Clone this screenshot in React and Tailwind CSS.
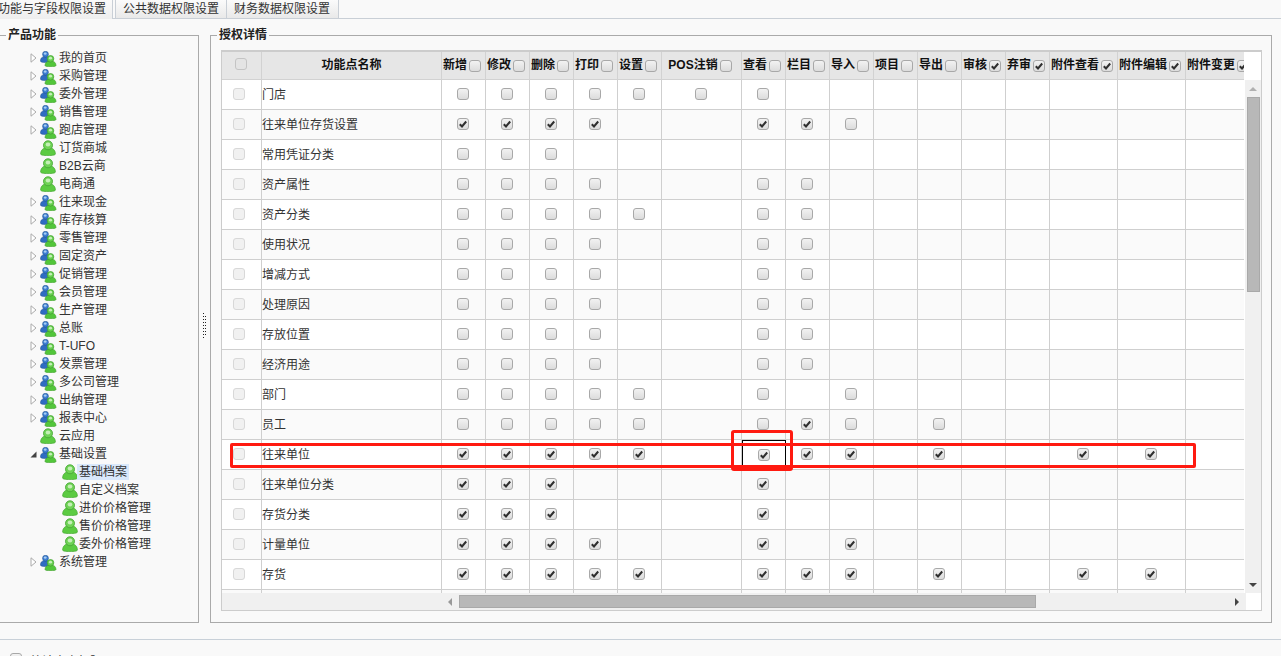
const treeItems = [
  { name: '我的首页', type: 'group' },
  { name: '采购管理', type: 'group' },
  { name: '委外管理', type: 'group' },
  { name: '销售管理', type: 'group' },
  { name: '跑店管理', type: 'group' },
  { name: '订货商城', type: 'leaf' },
  { name: 'B2B云商', type: 'leaf' },
  { name: '电商通', type: 'leaf' },
  { name: '往来现金', type: 'group' },
  { name: '库存核算', type: 'group' },
  { name: '零售管理', type: 'group' },
  { name: '固定资产', type: 'group' },
  { name: '促销管理', type: 'group' },
  { name: '会员管理', type: 'group' },
  { name: '生产管理', type: 'group' },
  { name: '总账', type: 'group' },
  { name: 'T-UFO', type: 'group' },
  { name: '发票管理', type: 'group' },
  { name: '多公司管理', type: 'group' },
  { name: '出纳管理', type: 'group' },
  { name: '报表中心', type: 'group' },
  { name: '云应用', type: 'leaf' },
  { name: '基础设置', type: 'open' },
  { name: '基础档案', type: 'child', selected: true },
  { name: '自定义档案', type: 'child' },
  { name: '进价价格管理', type: 'child' },
  { name: '售价价格管理', type: 'child' },
  { name: '委外价格管理', type: 'child' },
  { name: '系统管理', type: 'group' },
];

const columns = [
  { name: '新增', width: 'w-[44px]', checked: false },
  { name: '修改', width: 'w-[44px]', checked: false },
  { name: '删除', width: 'w-[44px]', checked: false },
  { name: '打印', width: 'w-[44px]', checked: false },
  { name: '设置', width: 'w-[44px]', checked: false },
  { name: 'POS注销', width: 'w-[80px]', checked: false },
  { name: '查看', width: 'w-[44px]', checked: false },
  { name: '栏目', width: 'w-[44px]', checked: false },
  { name: '导入', width: 'w-[44px]', checked: false },
  { name: '项目', width: 'w-[44px]', checked: false },
  { name: '导出', width: 'w-[44px]', checked: false },
  { name: '审核', width: 'w-[44px]', checked: true },
  { name: '弃审', width: 'w-[44px]', checked: true },
  { name: '附件查看', width: 'w-[68px]', checked: true },
  { name: '附件编辑', width: 'w-[68px]', checked: true },
  { name: '附件变更', width: 'w-[68px]', checked: true },
];

// 0 = no box, 1 = empty box, 2 = ticked box, one digit per column
const rows = [
  ['门店', '1111111000000000'],
  ['往来单位存货设置', '2222002210000000'],
  ['常用凭证分类', '1110000000000000'],
  ['资产属性', '1111001100000000'],
  ['资产分类', '1111101100000000'],
  ['使用状况', '1111001100000000'],
  ['增减方式', '1111001100000000'],
  ['处理原因', '1111001100000000'],
  ['存放位置', '1111001100000000'],
  ['经济用途', '1111001100000000'],
  ['部门', '1111101010000000'],
  ['员工', '1111101210100000'],
  ['往来单位', '2222202220200220'],
  ['往来单位分类', '2220002000000000'],
  ['存货分类', '2220002000000000'],
  ['计量单位', '2222002020000000'],
  ['存货', '2222202220200220'],
  ['', '0000000000000000'],
];

const LeafIcon = () => (
  <svg viewBox="0 0 16 16" className="w-4 h-4 shrink-0">
    <path d="M.6 14c0-3.600 2.400-5.800 5-6.300h4.800c2.600.5 5 2.700 5 6.300 0 1-3 1.600-7.400 1.600S.6 15 .6 14z" fill="#5ccb42" stroke="#46a832" strokeWidth=".7" />
    <circle cx="8" cy="5.300" r="4.500" fill="#6fd356" stroke="#4aa838" strokeWidth=".9" />
    <ellipse cx="8" cy="4.600" rx="2.300" ry="2" fill="#c4efb6" />
  </svg>
);

const GroupIcon = () => (
  <svg viewBox="0 0 17 16" className="w-[17px] h-4 shrink-0 mt-[1px]">
    <path d="M.4 10c0-2.600 1.500-4 3-4.300h4.200c1.500.3 3 1.700 3 4.300 0 1-2 1.500-5 1.500S.4 11 .4 10z" fill="#2f6cc2" stroke="#24548f" strokeWidth=".5" />
    <circle cx="5.500" cy="3.200" r="2.900" fill="#3d7fd4" stroke="#24548f" strokeWidth=".6" />
    <ellipse cx="5.200" cy="2.600" rx="1.400" ry="1.200" fill="#a9cdf3" />
    <path d="M5 14.500c0-2.700 1.800-4 3.400-4.300h4.200c1.600.3 3.400 1.600 3.400 4.300 0 .8-2 1.200-5.500 1.200S5 15.300 5 14.500z" fill="#52c63a" stroke="#3f9e2c" strokeWidth=".6" />
    <circle cx="10.500" cy="7.800" r="3.300" fill="#66d04e" stroke="#3f9e2c" strokeWidth=".7" />
    <ellipse cx="10.500" cy="7.200" rx="1.600" ry="1.400" fill="#c4efb6" />
  </svg>
);

const TreeRow = ({ item }) => {
  const isChild = item.type === 'child';
  const isGroup = item.type === 'group' || item.type === 'open';
  return (
    <div className={`flex items-center h-[18px] ${isChild ? 'pl-[63px]' : 'pl-[31px]'}`}>
      {!isChild && (
        <span className="w-[10px] shrink-0 flex">
          {item.type === 'group' && (
            <svg viewBox="0 0 7 10" className="w-[7px] h-[10px]">
              <path d="M1 .8l5 4.200-5 4.200z" fill="#fff" stroke="#aaa" />
            </svg>
          )}
          {item.type === 'open' && (
            <svg viewBox="0 0 7 7" className="w-[7px] h-[7px]">
              <path d="M6.500 .5v6h-6z" fill="#444" />
            </svg>
          )}
        </span>
      )}
      {isGroup ? <GroupIcon /> : <LeafIcon />}
      <span className={`h-4 px-[2px] leading-4 whitespace-nowrap ${isChild ? '-ml-[1px]' : ''} ${item.type === 'leaf' ? 'ml-[1px]' : ''} ${item.selected ? 'bg-[#d9e8fb]' : ''}`}>{item.name}</span>
    </div>
  );
};

const Check = ({ checked, tone = 'normal' }) => {
  const toneClass = {
    normal: 'border-[#a8a8a8] bg-gradient-to-b from-[#f2f2f2] to-[#dcdcdc]',
    pale: 'border-[#d8d8d8] bg-[#f1f1f1]',
    head: 'border-[#c4c4c4] bg-[#e4e4e4]',
  }[tone];
  return (
    <span className={`inline-flex items-center justify-center w-3 h-3 shrink-0 rounded-[3px] border align-middle ${toneClass}`}>
      {checked && (
        <svg viewBox="0 0 10 10" className="w-[10px] h-[10px]">
          <path d="M1.800 5.200l2.200 2.300 4.200-5" fill="none" stroke="#2f2f2f" strokeWidth="2" />
        </svg>
      )}
    </span>
  );
};

const Tri = ({ d, fill }) => (
  <svg viewBox="0 0 8 8" className="w-2 h-2 shrink-0">
    <path d={d} fill={fill} />
  </svg>
);

const Tab = ({ children, className }) => (
  <div className={`h-[19px] leading-[18px] whitespace-nowrap border-r border-b border-[#c9cfd6] bg-gradient-to-b from-[#fbfbfb] to-[#e9e9e9] ${className}`}>
    {children}
  </div>
);

export default function App() {
  return (
    <div className="relative w-[1281px] h-[656px] overflow-hidden bg-[#f9f9f9] text-xs text-[#333] font-['Liberation_Sans','Noto_Sans_CJK_SC',sans-serif]">
      <div className="flex h-[19px] border-b border-[#c9cfd6]">
        <div className="h-[19px] leading-[18px] w-[115px] -ml-[2px] pr-[6px] mr-[2px] whitespace-nowrap border-r border-[#c9cfd6] bg-gradient-to-b from-[#fafafa] to-[#eeeeee]">
          功能与字段权限设置
        </div>
        <Tab className="w-[112px] pl-[7px] border-l">公共数据权限设置</Tab>
        <Tab className="w-[112px] pl-[7px]">财务数据权限设置</Tab>
        <div className="flex-1" />
      </div>

      <div className="flex h-[621px] pt-2 border-b border-[#c8d0d8]">
        <fieldset className="w-[201px] h-[596px] -ml-[2px] shrink-0 border border-[#aaa]">
          <legend className="ml-[7px] px-[2px] h-4 leading-4 font-bold text-[#222]">产品功能</legend>
          <div className="pt-[6px]">
            {treeItems.map((item) => <TreeRow key={item.name} item={item} />)}
          </div>
        </fieldset>

        <div className="w-[11px] shrink-0 flex items-center justify-center h-[596px]">
          <svg viewBox="0 0 3 25" className="w-[3px] h-[25px]">
            {[0, 3, 6, 9, 12, 15, 18, 21, 24].map((y) => <rect key={y} x="0" y={y} width="1" height="1" fill="#222" />)}
            {[3, 6, 9, 12, 15, 18, 21].map((y) => <rect key={y} x="2" y={y} width="1" height="1" fill="#222" />)}
          </svg>
        </div>

        <fieldset className="w-[1062px] h-[596px] shrink-0 border border-[#aaa] pl-[10px]">
          <legend className="-ml-[4px] px-[2px] h-4 leading-4 font-bold text-[#222]">授权详情</legend>
          <div className="mt-[7px] w-[1041px] h-[561px] flex flex-col border border-t-2 border-[#cccccc] bg-white">
            <div className="flex h-[541px]">
              <div className="w-[1023px] overflow-hidden">
                <table className="table-fixed w-[1032px] border-separate border-spacing-0">
                  <colgroup>
                    <col className="w-[40px]" />
                    <col className="w-[180px]" />
                    {columns.map((c) => <col key={c.name} className={c.width} />)}
                  </colgroup>
                  <thead>
                    <tr className="h-[28px] bg-[#e6e6e6] text-[#111]">
                      <th className="border-r border-b border-[#d2d2d2]">
                        <span className="flex justify-center -mt-[3px] pr-[1px]"><Check tone="head" /></span>
                      </th>
                      <th className="border-r border-b border-[#d2d2d2] font-bold">
                        <span className="block -mt-[1px]">功能点名称</span>
                      </th>
                      {columns.map((c) => (
                        <th key={c.name} className="border-r border-b border-[#d2d2d2] font-bold overflow-hidden">
                          <span className="flex items-center justify-center gap-[2px] whitespace-nowrap pr-[3px]">
                            <span className="-mt-[1px]">{c.name}</span>
                            <Check checked={c.checked} />
                          </span>
                        </th>
                      ))}
                    </tr>
                  </thead>
                  <tbody>
                    {rows.map(([name, marks], i) => (
                      <tr key={i} className={`h-[30px] ${i % 2 === 0 ? 'bg-white' : 'bg-[#fafafa]'}`}>
                        <td className="border-r border-b border-[#cfcfcf]">
                          {name && <span className="flex justify-center pr-[5px] pb-[1px]"><Check tone="pale" /></span>}
                        </td>
                        <td className="border-r border-b border-[#cfcfcf]">{name}</td>
                        {columns.map((c, j) => (
                          <td key={c.name} className={`border-r border-b border-[#cfcfcf] ${name === '往来单位' && c.name === '查看' ? 'outline outline-black -outline-offset-1 pl-[1px] pt-[1px]' : ''}`}>
                            {marks[j] !== '0' && (
                              <span className="flex justify-center pr-[1px] pb-[1px]"><Check checked={marks[j] === '2'} /></span>
                            )}
                          </td>
                        ))}
                      </tr>
                    ))}
                  </tbody>
                </table>
              </div>
              <div className="w-4 ml-[1px] flex flex-col">
                <div className="h-[28px] bg-white" />
                <div className="flex-1 bg-[#f0f0f0] flex flex-col items-center">
                  <div className="h-[17px] flex items-center justify-center">
                    <Tri d="M4 2l4 4H0z" fill="#b0b0b0" />
                  </div>
                  <div className="w-[13px] h-[195px] bg-[#b8b8b8] border border-[#a9a9a9]" />
                  <div className="flex-1" />
                  <div className="h-[17px] flex items-center justify-center">
                    <Tri d="M0 2h8L4 6z" fill="#444" />
                  </div>
                </div>
              </div>
            </div>
            <div className="flex h-[17px]">
              <div className="w-[1024px] bg-[#f0f0f0] flex items-center pl-[224px]">
                <Tri d="M6 0v8L2 4z" fill="#999" />
                <div className="w-[577px] h-[13px] ml-[5px] bg-[#b8b8b8] border border-[#a9a9a9]" />
                <div className="flex-1" />
                <div className="mr-[5px]">
                  <Tri d="M2 0v8l4-4z" fill="#444" />
                </div>
              </div>
              <div className="flex-1 bg-white" />
            </div>
          </div>
        </fieldset>
      </div>

      <div className="flex items-start gap-2 pl-[10px] pt-[13px]">
        <Check />
        <span className="mt-[1px] leading-4">统计方案权限</span>
      </div>

      {/* red marks drawn over the screenshot */}
      <div className="absolute left-[230px] top-[443px] w-[966px] h-[25px] border-[3px] border-[#ff1a10] rounded-[2px] pointer-events-none" />
      <div className="absolute left-[731px] top-[430px] w-[62px] h-[41px] border-[3px] border-[#ff1a10] rounded-[3px] pointer-events-none" />
    </div>
  );
}
